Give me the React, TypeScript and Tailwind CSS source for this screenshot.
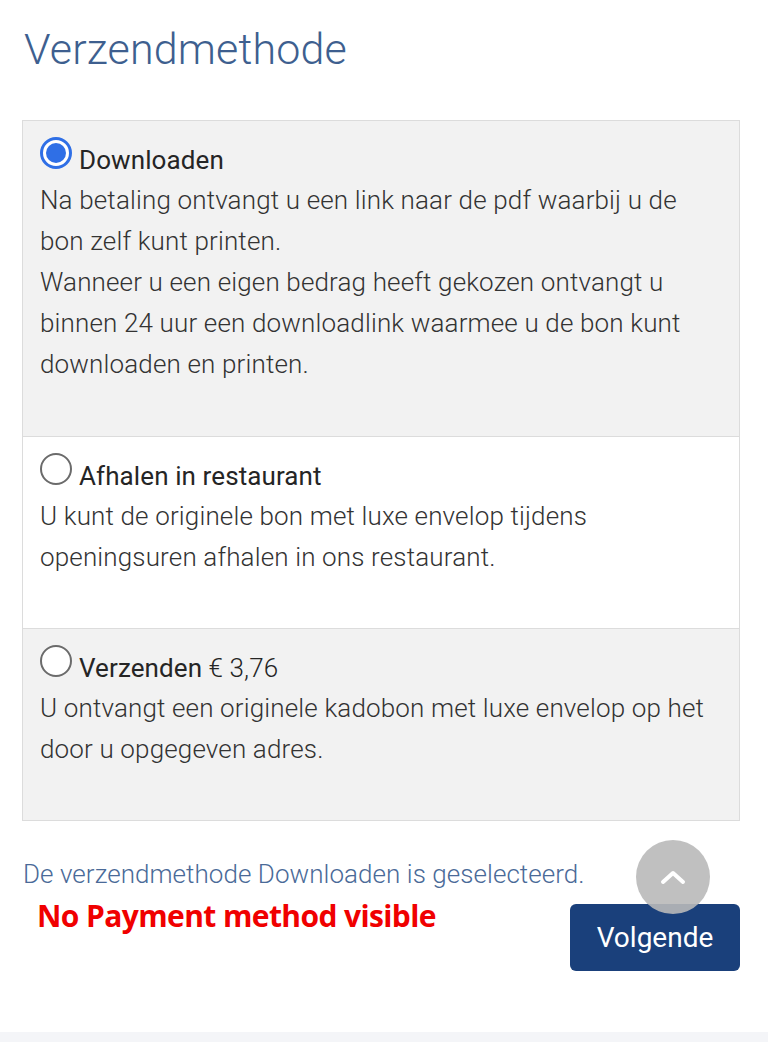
import { useState } from 'react'

type Method = {
  id: string
  title: string
  price?: string
  lines: string[]
}

const methods: Method[] = [
  {
    id: 'download',
    title: 'Downloaden',
    lines: [
      'Na betaling ontvangt u een link naar de pdf waarbij u de bon zelf kunt printen.',
      'Wanneer u een eigen bedrag heeft gekozen ontvangt u binnen 24 uur een downloadlink waarmee u de bon kunt downloaden en printen.',
    ],
  },
  {
    id: 'pickup',
    title: 'Afhalen in restaurant',
    lines: ['U kunt de originele bon met luxe envelop tijdens openingsuren afhalen in ons restaurant.'],
  },
  {
    id: 'ship',
    title: 'Verzenden',
    price: '€ 3,76',
    lines: ['U ontvangt een originele kadobon met luxe envelop op het door u opgegeven adres.'],
  },
]

function Radio({ checked }: { checked: boolean }) {
  if (checked) {
    return (
      <span className="w-[32px] h-[32px] shrink-0 rounded-full border-[3px] border-[#2f6fe6] bg-white flex items-center justify-center">
        <span className="w-[20px] h-[20px] rounded-full bg-[#2f6fe6]" />
      </span>
    )
  }
  return <span className="w-[32px] h-[32px] shrink-0 rounded-full border-2 border-[#6b6b6b] bg-white" />
}

export default function App() {
  const [selected, setSelected] = useState('download')
  const current = methods.find((m) => m.id === selected)

  return (
    <div className="min-h-[1042px] bg-white flex flex-col font-['Roboto',sans-serif]">
      <div className="flex-1 pl-[22px] pr-[28px]">
        <h1 className="pt-[23px] pl-[2px] text-[43px] leading-[52px] tracking-[0.15px] font-light text-[#3e5f8f]">
          Verzendmethode
        </h1>

        <div className="mt-[45px] border border-[#dcdcdc]">
          {methods.map((m, i) => (
            <label
              key={m.id}
              onClick={() => setSelected(m.id)}
              className={`block h-[192px] first:h-[315px] px-[17px] pt-[16px] cursor-pointer ${
                i > 0 ? 'border-t border-[#dcdcdc]' : ''
              } ${i === 1 ? 'bg-white' : 'bg-[#f2f2f2]'}`}
            >
              <div className="flex items-start gap-[7px] h-[43px]">
                <Radio checked={selected === m.id} />
                <span className="mt-[3px] text-[26px] leading-[41px] tracking-[0.1px] text-[#252525]">
                  {m.title}
                  {m.price && <span className="font-light"> {m.price}</span>}
                </span>
              </div>
              {m.lines.map((l) => (
                <p key={l} className="text-[26px] leading-[41px] tracking-[0.15px] font-light text-[#333] pr-[8px]">
                  {l}
                </p>
              ))}
            </label>
          ))}
        </div>

        <div className="relative mt-[36px]">
          <p className="text-[26px] leading-[34px] tracking-[0.05px] font-light text-[#4a6a98] ml-[1px]">
            De verzendmethode {current?.title} is geselecteerd.
          </p>
          <div className="flex justify-between items-start mt-[13px]">
            <p className="-mt-[11px] ml-[15px] font-['Open_Sans',sans-serif] font-bold text-[30px] text-[#f00000] tracking-[-0.6px]">
              No Payment method visible
            </p>
            <button className="w-[170px] h-[67px] rounded-[6px] bg-[#1a407b] text-white text-[28px]">
              Volgende
            </button>
          </div>
          <button className="absolute left-[614px] top-[-17px] w-[74px] h-[74px] rounded-full bg-[#b9b9b9]/90 flex items-center justify-center">
            <svg width="26" height="16" viewBox="0 0 26 16" fill="none">
              <path d="M3 13 L13 4 L23 13" stroke="white" strokeWidth="4" strokeLinecap="round" strokeLinejoin="round" />
            </svg>
          </button>
        </div>
      </div>
      <div className="h-[10px] bg-[#f4f5f8]" />
    </div>
  )
}
